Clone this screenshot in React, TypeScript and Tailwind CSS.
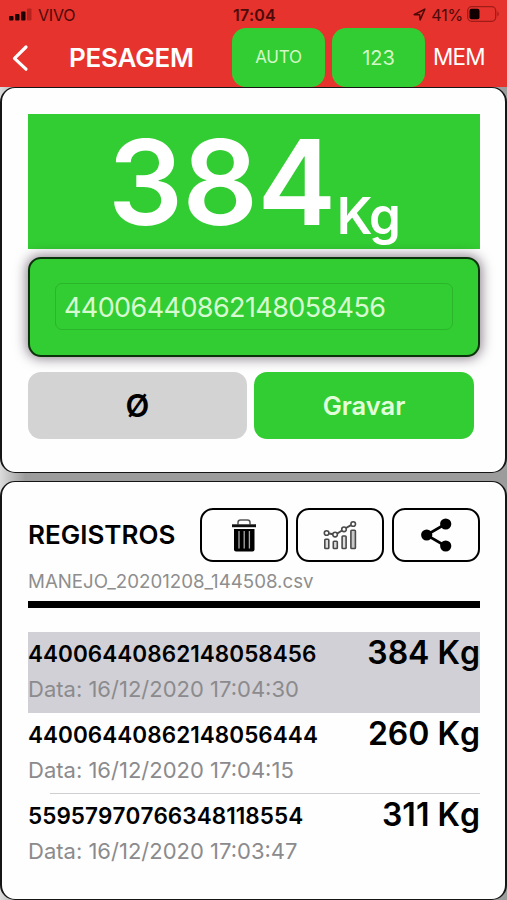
import type { ReactNode } from "react";
import clsx from "clsx";

type Registro = {
  id: string;
  data: string;
  peso: string;
  selected?: boolean;
  divider?: boolean;
};

const REGISTROS: Registro[] = [
  { id: "44006440862148058456", data: "16/12/2020 17:04:30", peso: "384 Kg", selected: true },
  { id: "44006440862148056444", data: "16/12/2020 17:04:15", peso: "260 Kg", divider: true },
  { id: "55957970766348118554", data: "16/12/2020 17:03:47", peso: "311 Kg" },
];

function StatusBar() {
  return (
    <div className="grid h-7 grid-cols-3 items-center pl-[9px] pr-[7px] text-[16px] leading-none text-[#4d0a08]">
      <div className="flex items-center gap-[6px]">
        <svg width="23" height="13" viewBox="0 0 23 13" aria-hidden>
          <rect x="0" y="8" width="4.5" height="4.5" rx="1" fill="#1c0202" />
          <rect x="6" y="6" width="4.5" height="6.5" rx="1" fill="#1c0202" />
          <rect x="12" y="3.5" width="4.5" height="9" rx="1" fill="#1c0202" />
          <rect x="18" y="0.5" width="4.5" height="12" rx="1" fill="#b5221d" />
        </svg>
        <span className="pt-px tracking-[-0.2px]">VIVO</span>
      </div>
      <span className="pt-px text-center font-semibold tracking-[0.2px]">17:04</span>
      <div className="flex items-center justify-end">
        <svg width="13" height="13" viewBox="0 0 13 13" aria-hidden>
          <path d="M1.2 6.6 11.8 1.2 7.2 11.8 6.6 6.8Z" fill="none" stroke="#4d0a08" strokeWidth="1.6" strokeLinejoin="round" />
        </svg>
        <span className="ml-[5px] pt-px tracking-[-0.2px]">41%</span>
        <svg className="ml-[4px]" width="33" height="16" viewBox="0 0 33 16" aria-hidden>
          <rect x="0.7" y="0.7" width="28" height="14.6" rx="4" fill="none" stroke="#a01c18" strokeWidth="1.3" />
          <rect x="2.5" y="2.8" width="10" height="10.4" rx="2" fill="#120000" />
          <path d="M30.4 5.5c1.8.9 1.8 4.1 0 5Z" fill="#a01c18" />
        </svg>
      </div>
    </div>
  );
}

function NavBar() {
  return (
    <div className="flex h-[59px] text-white">
      <button type="button" aria-label="Voltar" className="flex w-[69px] items-center pl-3">
        <svg width="17" height="28" viewBox="0 0 17 28" fill="none" stroke="currentColor" strokeWidth="3.2" strokeLinecap="round" strokeLinejoin="round" aria-hidden>
          <path d="M14 3 2.5 14.4 14 25.2" />
        </svg>
      </button>
      <h1 className="w-[163px] self-center text-[26px] font-semibold leading-none tracking-[-0.2px]">PESAGEM</h1>
      <button type="button" className="w-[93px] rounded-[14px] bg-[#32cd32] pt-px text-[17px] tracking-[-0.2px] text-[#d3f8c8]">
        AUTO
      </button>
      <button type="button" className="ml-[7px] w-[93px] rounded-[14px] bg-[#32cd32] text-[20px] text-[#d3f8c8]">
        123
      </button>
      <button type="button" className="ml-[8px] text-[22.5px] leading-none tracking-[-0.8px]">
        MEM
      </button>
    </div>
  );
}

function Card({ className, children }: { className?: string; children: ReactNode }) {
  return (
    <section
      className={clsx(
        "rounded-[15px] border-x-2 border-y-[1.5px] border-[#151515] bg-[#fefefe] pl-[26px] pr-[25px]",
        className,
      )}
    >
      {children}
    </section>
  );
}

function IconButton({ label, children }: { label: string; children: ReactNode }) {
  return (
    <button
      type="button"
      aria-label={label}
      className="flex h-[54px] w-[88px] items-center justify-center rounded-[13px] border-[2.5px] border-black"
    >
      {children}
    </button>
  );
}

function TrashIcon() {
  return (
    <svg width="26" height="34" viewBox="0 0 26 34" fill="none" aria-hidden>
      <path d="M7 6.5V4.5Q7 2 9.500 2H16.500Q19 2 19 4.500V6.500" stroke="#555" strokeWidth="1.5" />
      <path d="M1 6.300H25V9.200H1Z" fill="#111" />
      <path d="M3 11H23.500V31.500Q23.500 33.500 21.500 33.500H5Q3 33.500 3 31.500Z" fill="#000" />
      <path d="M8 13V30.500M13.200 13V30.500M18.400 13V30.500" stroke="#aaa" strokeWidth="1.3" />
    </svg>
  );
}

function ChartIcon() {
  return (
    <svg width="35" height="32" viewBox="0 0 35 32" fill="none" stroke="#4a4a4a" strokeWidth="1.6" aria-hidden>
      <path d="M6.200 14.500 10 15.300M14.300 14.500 19 11.500M23 9 28 6.200" strokeWidth="2" />
      <circle cx="3.600" cy="14" r="2.300" />
      <circle cx="12.100" cy="15.600" r="2.300" />
      <circle cx="21" cy="10.300" r="2.300" />
      <circle cx="30.200" cy="5" r="2.300" />
      <rect x="1.800" y="20.300" width="4" height="9.200" rx="0.800" fill="#ddd" />
      <rect x="10.300" y="22.300" width="4" height="7.200" rx="0.800" fill="#ddd" />
      <rect x="19.100" y="17" width="4" height="12.500" rx="0.800" fill="#ddd" />
      <rect x="27.900" y="11.200" width="4.500" height="18.300" rx="0.800" fill="#c8c8c8" />
    </svg>
  );
}

function ShareIcon() {
  return (
    <svg width="31" height="34" viewBox="0 0 31 34" aria-hidden>
      <path d="M24.500 6 5.500 17 24.500 28" fill="none" stroke="#000" strokeWidth="2.600" />
      <circle cx="24.700" cy="6" r="5.600" />
      <circle cx="5.700" cy="17" r="5.600" />
      <circle cx="24.700" cy="28" r="5.600" />
    </svg>
  );
}

function Row({ r }: { r: Registro }) {
  return (
    <li className={clsx("h-[81px]", r.selected && "bg-[#d1d0d6]")}>
      <div className="flex h-[42px] items-center justify-between whitespace-nowrap [font-kerning:none]">
        <span className="pt-[2px] text-[22.5px] font-semibold leading-none tracking-[0.05px]">{r.id}</span>
        <span className="text-[32px] font-semibold leading-none">{r.peso}</span>
      </div>
      <p className="h-[38px] pt-[3px] text-[22px] leading-[24px] text-[#8b8b8d]">Data: {r.data}</p>
      {r.divider && <div className="ml-[22px] h-px bg-[#cfcfd1]" />}
    </li>
  );
}

export default function App() {
  return (
    <div className="h-[900px] w-[507px] overflow-hidden bg-[#e6332d] font-['Inter','Liberation_Sans',sans-serif]">
      <StatusBar />
      <NavBar />

      <main className="flex h-[813px] flex-col gap-2 bg-linear-to-r from-[#dcdcdc] via-[#9c9c9c] via-5% to-[#9c9c9c] to-95%">
        <Card className="h-[386px] pt-[26px]">
          <div className="flex h-[135px] items-baseline bg-[#32cd32] pl-[80px] font-semibold text-white">
            <span className="text-[118px] leading-[136px] tracking-[-0.5px]">384</span>
            <span className="relative top-[9px] ml-[1px] text-[51px] leading-none tracking-[-1.5px]">Kg</span>
          </div>

          <div className="mt-[8px] h-[100px] rounded-[13px] border-2 border-[#0b330b] bg-[#32cd32] px-[25px] py-[24px] shadow-[0_0_12px_2px_rgba(40,20,40,0.5)]">
            <div className="flex h-[47px] items-center rounded-[7px] border border-[#2bb52b] pl-[8px] pt-[3px] text-[27px] tracking-[-0.6px] text-[#d6fbd0]">
              44006440862148058456
            </div>
          </div>

          <div className="mt-[15px] flex gap-[7px]">
            <button type="button" className="h-[67px] w-[219px] rounded-[13px] bg-[#d3d3d3] text-[31px] font-semibold leading-none">
              Ø
            </button>
            <button type="button" className="h-[67px] w-[220px] rounded-[13px] bg-[#32cd32] text-[25.5px] font-semibold leading-none text-[#e2ffdc]">
              Gravar
            </button>
          </div>
        </Card>

        <Card className="h-[419px] pt-[26px]">
          <div className="flex items-center">
            <h2 className="w-[172px] text-[26px] font-semibold leading-none">REGISTROS</h2>
            <div className="flex gap-2">
              <IconButton label="Apagar">
                <TrashIcon />
              </IconButton>
              <IconButton label="Gráfico">
                <ChartIcon />
              </IconButton>
              <IconButton label="Compartilhar">
                <ShareIcon />
              </IconButton>
            </div>
          </div>
          <p className="mt-[7px] text-[18.7px] leading-[26px] text-[#8e8e8e]">MANEJO_20201208_144508.csv</p>
          <div className="mt-[6px] h-[7px] bg-black" />

          <ul className="mt-6">
            {REGISTROS.map((r) => (
              <Row key={r.id} r={r} />
            ))}
          </ul>
        </Card>
      </main>
    </div>
  );
}
